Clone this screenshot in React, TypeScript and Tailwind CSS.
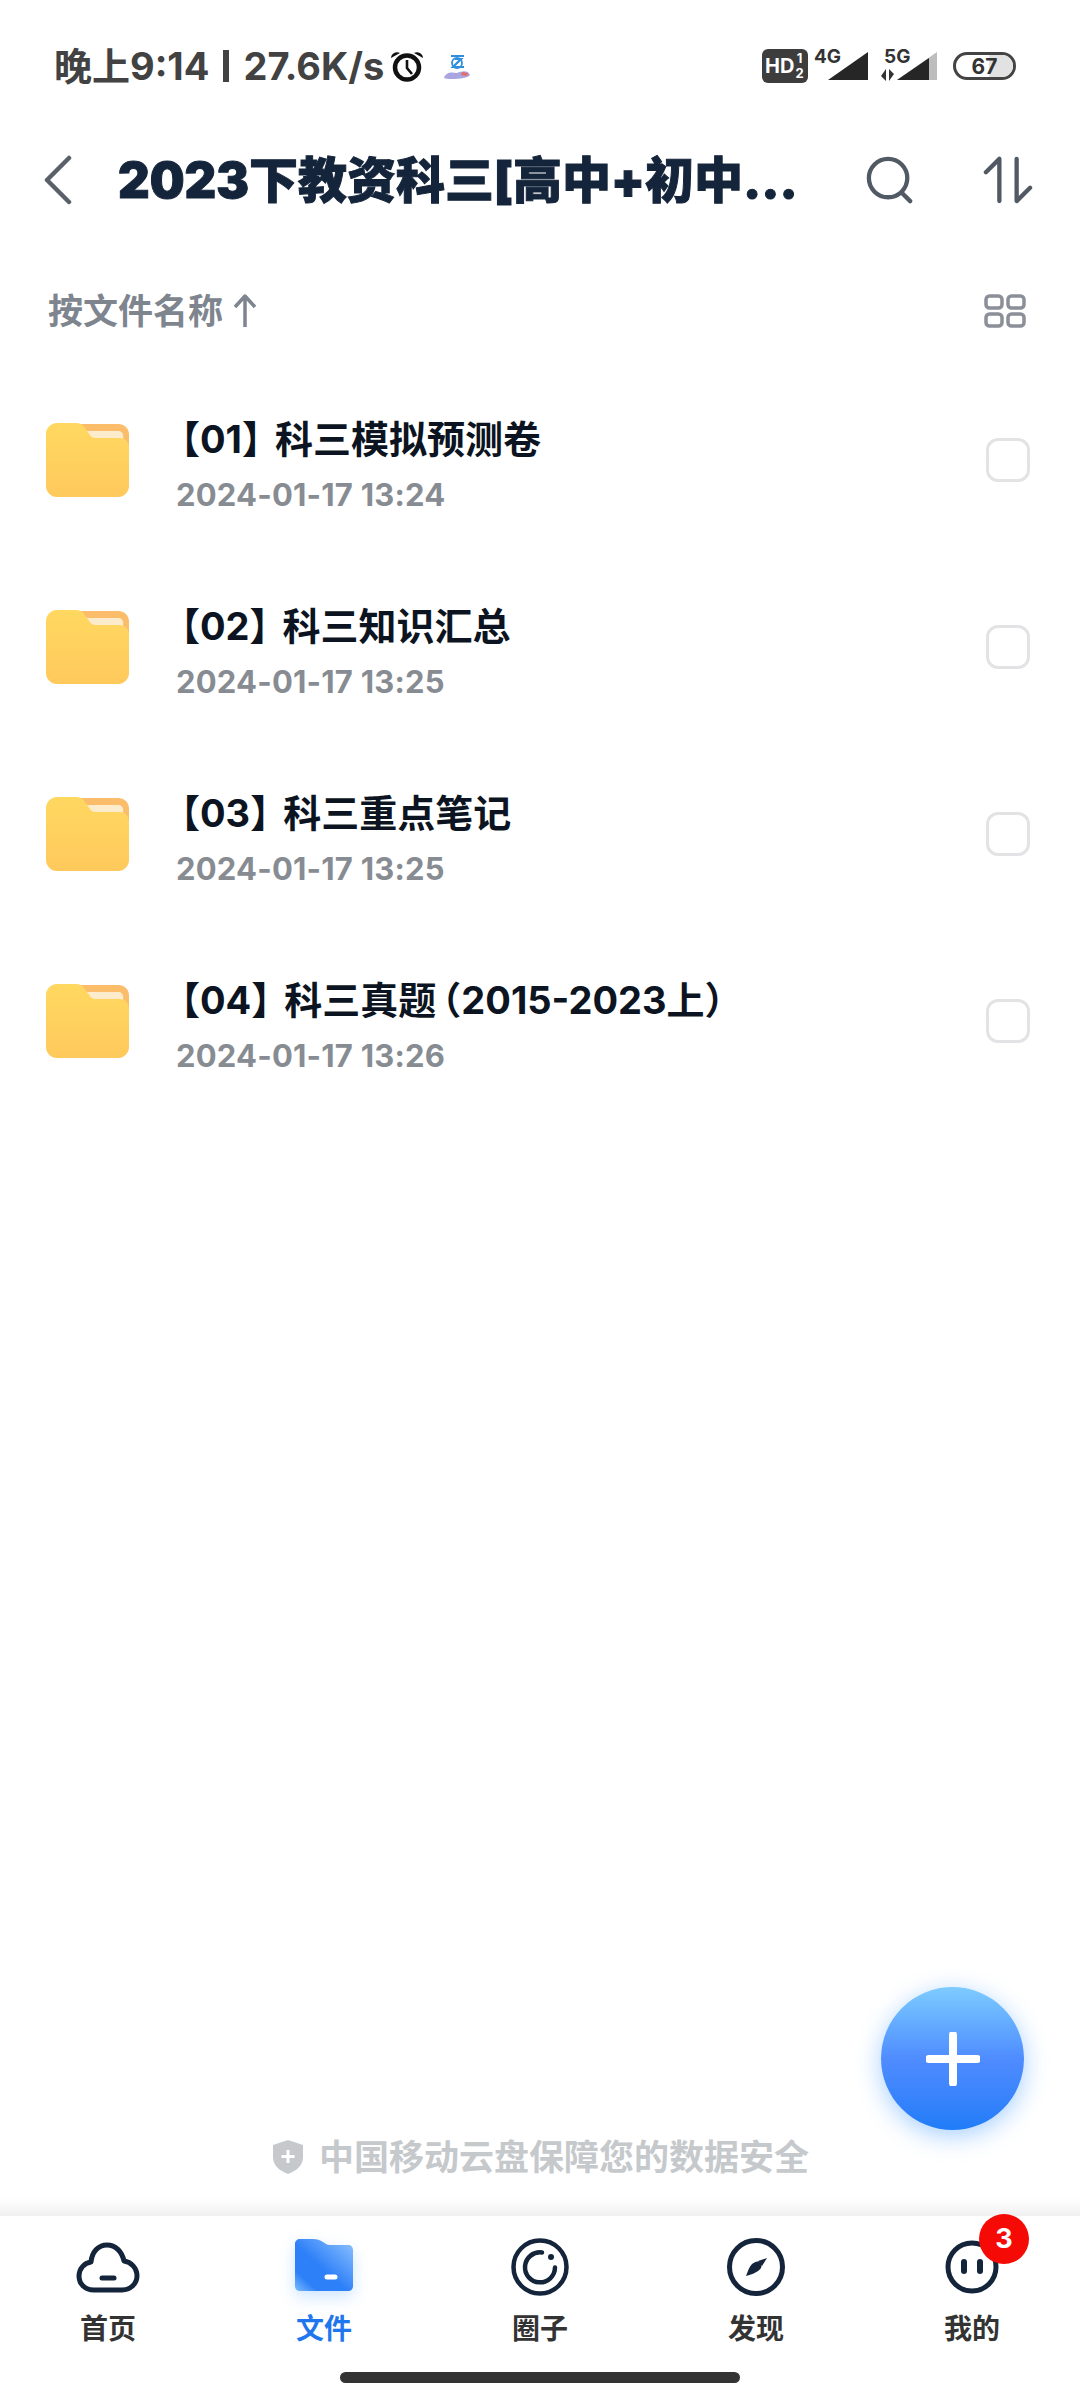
const FONT = "font-['Inter','Noto_Sans_CJK_SC',sans-serif]";

const files = [
  { no: "【01】", name: "科三模拟预测卷", time: "2024-01-17 13:24" },
  { no: "【02】", name: "科三知识汇总", time: "2024-01-17 13:25" },
  { no: "【03】", name: "科三重点笔记", time: "2024-01-17 13:25" },
  { no: "【04】", name: "科三真题", suffix: "（2015-2023上）", time: "2024-01-17 13:26" },
];

function FolderIcon() {
  return (
    <svg width="84" height="74" viewBox="0 0 86 74" preserveAspectRatio="none" className="shrink-0">
      <defs>
        <linearGradient id="folderFront" x1="0" y1="0" x2="0" y2="1">
          <stop offset="0" stopColor="#ffd860" />
          <stop offset="1" stopColor="#ffc95c" />
        </linearGradient>
      </defs>
      <path d="M30 1h44c6 0 11 4 11 11v20H30z" fill="#fbbd6a" />
      <path d="M38 8h36c3 0 5 2 5 5v4H44z" fill="#fdeccb" />
      <path
        d="M11 0h20c3 0 6 1 8 4l6 8c1 2 3 3 6 3h24c6 0 10 4 10 10v38c0 6-5 11-11 11H11C5 74 0 69 0 63V11C0 5 5 0 11 0z"
        fill="url(#folderFront)"
      />
    </svg>
  );
}

function StatusBar() {
  return (
    <div className="h-[108px] mt-[12px] shrink-0 flex items-center justify-between pl-[54px] pr-[64px]">
      <div className="flex items-center text-[#424242] text-[38px] font-bold leading-none">
        <span>晚上9:14</span>
        <div className="w-[6px] h-[32px] bg-[#424242] mx-[14px]" />
        <span>27.6K/s</span>
        <svg width="34" height="32" viewBox="0 0 34 32" className="ml-[6px]">
          <circle cx="17" cy="17.5" r="12" fill="none" stroke="#111" strokeWidth="4.5" />
          <path d="M17 10v8l5 6" fill="none" stroke="#111" strokeWidth="2.6" />
          <path d="M1 8a6 6 0 0 1 9-5zM33 8a6 6 0 0 0-9-5z" fill="#111" />
        </svg>
        <svg width="30" height="30" viewBox="0 0 30 30" className="ml-[18px]">
          <path d="M9 5h13M13 8h6l-8 8h11" fill="none" stroke="#2f8fdc" strokeWidth="2.2" />
          <circle cx="15" cy="12" r="5" fill="none" stroke="#2f8fdc" strokeWidth="1.8" />
          <path d="M2 27c2-6 7-6 13-5 5-2 11-3 13 2-2 4-22 5-26 3z" fill="#a9a5e0" />
          <path d="M20 21l6 1-1 3-6-1z" fill="#e86a6a" />
        </svg>
      </div>
      <div className="flex items-center">
        <div className="w-[46px] h-[34px] bg-[#3d3d3d] rounded-[6px] flex items-center pl-[3px] text-white font-bold leading-none">
          <span className="text-[20px]">HD</span>
          <span className="flex flex-col items-center text-[13px] ml-[1px] leading-[15px]">
            <span>1</span>
            <span>2</span>
          </span>
        </div>
        <div className="relative w-[54px] h-[34px] ml-[6px]">
          <span className="absolute left-0 -top-[2px] text-[#333] text-[19px] font-bold leading-none">4G</span>
          <svg width="40" height="28" viewBox="0 0 40 28" className="absolute right-0 bottom-[3px]">
            <path d="M40 0v28H0z" fill="#262626" />
          </svg>
        </div>
        <div className="relative w-[57px] h-[34px] ml-[12px]">
          <span className="absolute left-[4px] -top-[2px] text-[#333] text-[19px] font-bold leading-none">5G</span>
          <svg width="16" height="12" viewBox="0 0 16 12" className="absolute left-0 bottom-[2px]">
            <path d="M6 0v12L1 7zM9 12V0l5 5z" fill="#333" />
          </svg>
          <svg width="40" height="28" viewBox="0 0 40 28" className="absolute right-0 bottom-[3px]">
            <path d="M40 0v28H0z" fill="#bdbdbd" />
            <path d="M32 6v22H0z" fill="#262626" />
          </svg>
        </div>
        <div className="relative w-[63px] h-[28px] ml-[16px] rounded-full border-[3px] border-[#444] overflow-hidden flex items-center justify-center">
          <div className="absolute right-0 top-0 bottom-0 w-[24px] bg-[#e2e2e2]" />
          <span className="relative text-[#333] text-[21px] font-bold leading-none">67</span>
        </div>
      </div>
    </div>
  );
}

function Header() {
  return (
    <div className="h-[120px] shrink-0 flex items-center pl-[44px]">
      <svg width="28" height="50" viewBox="0 0 28 50" className="shrink-0">
        <path d="M25 3L3 25l22 22" fill="none" stroke="#5a6068" strokeWidth="4.5" strokeLinecap="round" strokeLinejoin="round" />
      </svg>
      <h1 className="ml-[46px] w-[748px] shrink-0 text-[#14243a] text-[49px] font-black leading-none whitespace-nowrap [-webkit-text-stroke:1px_#14243a]">
        2023下教资科三[高中+初中...
      </h1>
      <svg width="48" height="48" viewBox="0 0 50 50" className="shrink-0">
        <circle cx="23" cy="23" r="20" fill="none" stroke="#515a64" strokeWidth="4.5" />
        <path d="M37 38l9 9" stroke="#515a64" strokeWidth="4.5" strokeLinecap="round" />
      </svg>
      <svg width="50" height="48" viewBox="0 0 50 50" className="ml-[69px] shrink-0">
        <path d="M2 17L16 3v44" fill="none" stroke="#515a64" strokeWidth="4.5" strokeLinecap="round" strokeLinejoin="round" />
        <path d="M34 3v44l14-14" fill="none" stroke="#515a64" strokeWidth="4.5" strokeLinecap="round" strokeLinejoin="round" />
      </svg>
    </div>
  );
}

function SortRow() {
  return (
    <div className="h-[126px] shrink-0 flex items-center justify-between pl-[48px] pr-[54px] pt-[16px]">
      <div className="flex items-center text-[#7e858e] text-[35px] font-bold leading-none">
        <span>按文件名称</span>
        <svg width="24" height="36" viewBox="0 0 24 36" className="ml-[10px]">
          <path d="M12 34V3M2 14L12 3l10 11" fill="none" stroke="#7e858e" strokeWidth="3.5" strokeLinejoin="round" />
        </svg>
      </div>
      <svg width="42" height="34" viewBox="0 0 42 34">
        <g fill="none" stroke="#8b9098" strokeWidth="3.5">
          <rect x="2" y="2" width="16" height="12" rx="3.5" />
          <rect x="24" y="2" width="16" height="12" rx="3.5" />
          <rect x="2" y="20" width="16" height="12" rx="3.5" />
          <rect x="24" y="20" width="16" height="12" rx="3.5" />
        </g>
      </svg>
    </div>
  );
}

function FileRow({ no, name, suffix, time }: { no: string; name: string; suffix?: string; time: string }) {
  return (
    <div className="h-[187px] flex items-center pl-[46px] pr-[50px]">
      <FolderIcon />
      <div className="flex-1 ml-[42px] pt-[10px]">
        {/* brackets are half width in the original font */}
        <div className="text-[#0b1420] text-[38px] font-bold leading-[48px] whitespace-nowrap ml-[9px] [font-feature-settings:'halt']">
          <span>{no}</span>
          <span className="ml-[14px]">{name}</span>
          {suffix && <span className="ml-[6px]">{suffix}</span>}
        </div>
        <div className="mt-[12px] text-[#878c93] text-[31px] font-bold leading-[40px] whitespace-nowrap ml-[4px] tracking-[0.2px]">{time}</div>
      </div>
      <div className="w-[44px] h-[44px] rounded-[12px] border-[3px] border-[#e3e3e5] shrink-0" />
    </div>
  );
}

function TabIcon({ label }: { label: string }) {
  if (label === "首页") {
    return (
      <svg width="66" height="54" viewBox="0 0 66 54">
        <path
          d="M19 50C10 50 4 44 4 36c0-7 5-13 12-14C17 12 23 5 32 5s15 7 17 16c7 1 13 7 13 15 0 8-7 14-15 14z"
          fill="none"
          stroke="#14243a"
          strokeWidth="5"
          strokeLinejoin="round"
        />
        <path d="M27 38h12" stroke="#14243a" strokeWidth="5" strokeLinecap="round" />
      </svg>
    );
  }
  if (label === "文件") {
    return (
      <svg width="62" height="60" viewBox="0 0 62 60" className="overflow-visible drop-shadow-[0_6px_8px_rgba(90,170,255,0.3)]">
        <defs>
          <linearGradient id="tabFolder" x1="1" y1="0" x2="0" y2="1">
            <stop offset="0" stopColor="#8fc3ff" />
            <stop offset="0.55" stopColor="#2e80f8" />
            <stop offset="0.8" stopColor="#2e80f8" />
            <stop offset="1" stopColor="#7dbdff" />
          </linearGradient>
        </defs>
        <path
          d="M7 2h13c4 0 7 1 10 3 2 1 4 3 7 3h18c3 0 5 2 5 5v36c0 3-2 5-5 5H7c-3 0-5-2-5-5V7c0-3 2-5 5-5z"
          fill="url(#tabFolder)"
        />
        <path d="M34 40h8" stroke="#fff" strokeWidth="5" strokeLinecap="round" />
      </svg>
    );
  }
  if (label === "圈子") {
    return (
      <svg width="60" height="60" viewBox="0 0 60 60">
        <g fill="none" stroke="#14243a" strokeWidth="4.5" strokeLinecap="round">
          <circle cx="30" cy="30" r="26.5" />
          <path d="M32 15.5a15 15 0 1 0 13 15" />
        </g>
        <circle cx="41" cy="20" r="3" fill="#14243a" />
      </svg>
    );
  }
  if (label === "发现") {
    return (
      <svg width="60" height="60" viewBox="0 0 60 60">
        <circle cx="30" cy="30" r="26.5" fill="none" stroke="#14243a" strokeWidth="5" />
        <path d="M20 39c2-5 3-9 6-12 3-2 5-3 7-2 3 1 3 4 2 6-3 4-8 6-15 8z" fill="#14243a" />
        <path d="M41 21l-9 3 4 5z" fill="#14243a" />
      </svg>
    );
  }
  return (
    <svg width="54" height="54" viewBox="0 0 54 54">
      <circle cx="27" cy="27" r="24" fill="none" stroke="#14243a" strokeWidth="5" />
      <path d="M19 22v9M35 22v9" stroke="#14243a" strokeWidth="6" strokeLinecap="round" />
    </svg>
  );
}

function Tab({ label, active, badge }: { label: string; active?: boolean; badge?: number }) {
  return (
    <div className="relative w-[216px] flex flex-col items-center">
      <div className="h-[64px] flex items-center justify-center">
        <TabIcon label={label} />
      </div>
      {badge && (
        <div className="absolute left-[115px] -top-[21px] w-[50px] h-[50px] rounded-full bg-[#f50a05] text-white text-[27px] font-bold flex items-center justify-center">
          {badge}
        </div>
      )}
      <div className={`mt-[12px] text-[28px] font-bold leading-[36px] ${active ? "text-[#1f76ee]" : "text-[#333333]"}`}>
        {label}
      </div>
    </div>
  );
}

export default function App() {
  return (
    <div className={`relative w-[1080px] h-[2400px] bg-white flex flex-col overflow-hidden ${FONT}`}>
      <StatusBar />
      <Header />
      <SortRow />
      <div>
        {files.map((f) => (
          <FileRow key={f.no} no={f.no} name={f.name} suffix={f.suffix} time={f.time} />
        ))}
      </div>

      <div className="flex-1" />

      <div className="flex items-center justify-center h-[50px] mb-[16px] text-[#c6c9cc] text-[35px] font-bold leading-none">
        <svg width="34" height="36" viewBox="0 0 34 36" className="mr-[14px]">
          <path d="M17 1l15 5v12c0 9-7 14-15 17C9 32 2 27 2 18V6z" fill="#c6c9cc" />
          <path d="M17 11v13M10.5 17.5h13" stroke="#fff" strokeWidth="3" />
        </svg>
        <span>中国移动云盘保障您的数据安全</span>
      </div>

      <div className="h-[18px] bg-gradient-to-b from-white to-[#f0f0f0]" />
      <div className="h-[184px] flex pt-[19px]">
        {["首页", "文件", "圈子", "发现", "我的"].map((label) => (
          <Tab key={label} label={label} active={label === "文件"} badge={label === "我的" ? 3 : undefined} />
        ))}
      </div>

      {/* fab */}
      <div className="absolute left-[881px] top-[1987px] w-[143px] h-[143px] rounded-full bg-gradient-to-b from-[#7ecbff] via-[#4f8cff] to-[#1f7cf8] shadow-[0_6px_24px_rgba(60,150,255,0.45)] flex items-center justify-center">
        <svg width="54" height="54" viewBox="0 0 54 54">
          <path d="M27 3v48M3 27h48" stroke="#fff" strokeWidth="8" strokeLinecap="round" />
        </svg>
      </div>

      {/* home indicator */}
      <div className="absolute left-[340px] top-[2372px] w-[400px] h-[11px] rounded-full bg-[#333333]" />
    </div>
  );
}
